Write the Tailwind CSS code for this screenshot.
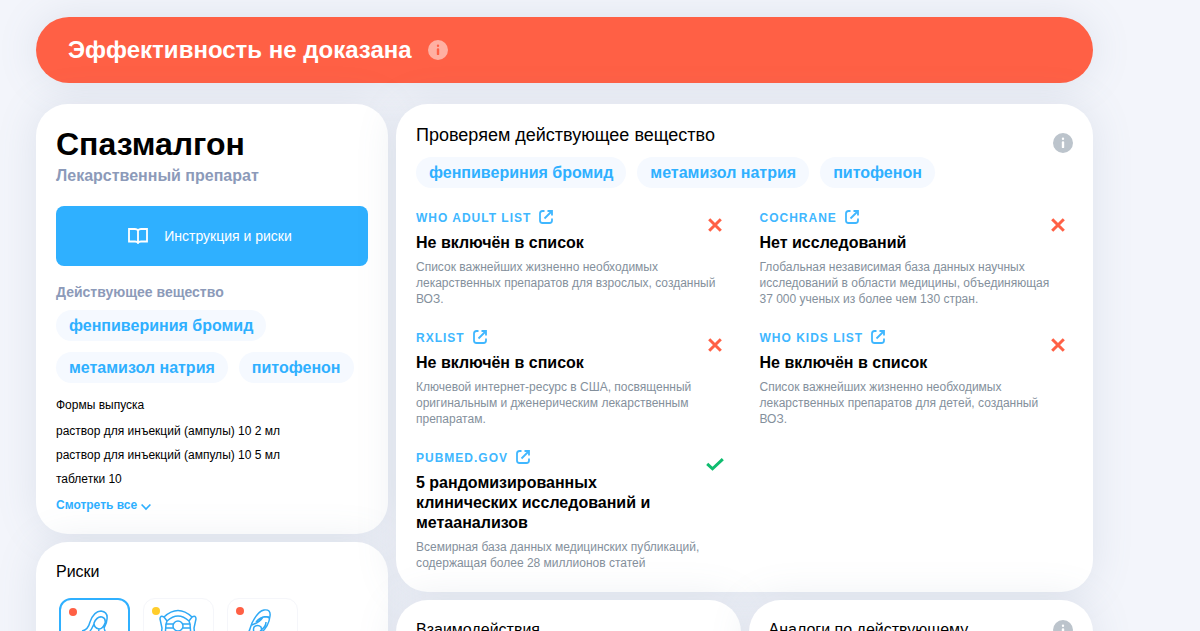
<!DOCTYPE html>
<html lang="ru">
<head>
    <meta charset="UTF-8">
    <meta name="viewport" content="width=device-width, initial-scale=1.0">
    <script src="https://cdn.jsdelivr.net/npm/@tailwindcss/browser@4"></script>
    <title>Спазмалгон</title>
</head>
<body class="bg-[#f3f5fb] font-['Liberation_Sans',Arial,sans-serif] text-black">

    <!-- icons used more than once -->
    <svg class="hidden">
        <symbol id="icon-info" viewBox="0 0 20 20">
            <path fill-rule="evenodd" fill="currentColor" d="M10 0a10 10 0 1 0 0 20a10 10 0 1 0 0-20zM10 4.600a1.200 1.200 0 1 1 0 2.400a1.200 1.200 0 1 1 0-2.400zM8.800 8.900q0-.6 1.200-.6t1.200.6v5.500q0 .6-1.200.6t-1.200-.6z"/>
        </symbol>
        <symbol id="icon-link" viewBox="0 0 14 14">
            <path fill="none" stroke="currentColor" stroke-width="1.8" d="M5.500 1H3.500Q1 1 1 3.500v7Q1 13 3.500 13h7Q13 13 13 10.500V8.500M8.500 1H13v4.500M13 1L5.500 8.500"/>
        </symbol>
        <symbol id="icon-cross" viewBox="0 0 14 14">
            <path fill="none" stroke="currentColor" stroke-width="3" d="M1.200 1.200l11.600 11.600M12.800 1.200L1.200 12.800"/>
        </symbol>
        <symbol id="icon-check" viewBox="0 0 18 13">
            <path fill="none" stroke="currentColor" stroke-width="3" d="M1.200 5.800l5.300 5L16.800 1.200"/>
        </symbol>
    </svg>

    <main class="pt-[17px] pl-9 pr-[107px]">

        <div class="flex items-center gap-4 h-[66px] pl-8 rounded-[33px] bg-[#ff6045] text-white shadow-[0_0_40px_rgba(110,130,155,0.15)]">
            <h2 class="text-2xl font-bold">Эффективность не доказана</h2>
            <button aria-label="Подробнее" class="text-white/50"><svg class="size-5"><use href="#icon-info"/></svg></button>
        </div>

        <div class="flex items-start gap-2 mt-[21px]">

            <div class="w-[352px] shrink-0 flex flex-col gap-2">
                <section class="rounded-[32px] bg-white px-5 pt-5 pb-[19px] shadow-[0_0_40px_rgba(110,130,155,0.15)]">
                    <h1 class="text-[32px] leading-10 font-bold">Спазмалгон</h1>
                    <p class="text-base font-bold text-[#8c9ab9]">Лекарственный препарат</p>
                    <button class="mt-[18px] w-full h-15 pr-1 rounded-lg bg-[#2fb0ff] text-white text-sm flex items-center justify-center gap-4">
                        <svg class="w-5 h-4" viewBox="0 0 20 16" fill="none" stroke="currentColor" stroke-width="1.8"><path d="M10 2.500Q9 1 7 1H1v12.500h6Q9.500 13.500 10 15Q10.500 13.500 13 13.500h6V1h-6Q11 1 10 2.500zM10 2.500V15"/></svg>
                        Инструкция и риски
                    </button>
                    <h3 class="mt-4 text-sm font-bold text-[#8c9ab9]">Действующее вещество</h3>
                    <div class="mt-2 flex flex-wrap gap-[11px] text-base leading-[31px] font-bold text-[#2fb0ff]">
                        <a href="#" class="px-[13px] rounded-full bg-[#f5f9ff]">фенпивериния бромид</a>
                        <a href="#" class="px-[13px] rounded-full bg-[#f5f9ff]">метамизол натрия</a>
                        <a href="#" class="px-[13px] rounded-full bg-[#f5f9ff]">питофенон</a>
                    </div>
                    <h4 class="mt-3 text-xs leading-5">Формы выпуска</h4>
                    <ul class="mt-1 text-xs leading-6">
                        <li>раствор для инъекций (ампулы) 10 2 мл</li>
                        <li>раствор для инъекций (ампулы) 10 5 мл</li>
                        <li>таблетки 10</li>
                    </ul>
                    <button class="mt-1 flex items-center gap-1 text-xs leading-5 font-bold text-[#2fb0ff]">
                        Смотреть все
                        <svg class="w-2.5 h-2 mt-1" viewBox="0 0 10 8" fill="none" stroke="currentColor" stroke-width="1.700"><path d="M.6 1.500L5 6L9.400 1.500"/></svg>
                    </button>
                </section>

                <section class="rounded-[32px] bg-white px-5 pt-5 pb-8 shadow-[0_0_40px_rgba(110,130,155,0.15)]">
                    <h3 class="text-base leading-5">Риски</h3>
                    <div class="mt-4 pl-[3px] flex gap-[13px] text-[#2fa9f5]">
                        <button aria-label="Беременность" class="relative w-[71px] h-20 rounded-xl border-2 border-[#2fb0ff]">
                            <span class="absolute left-2 top-2 size-2 rounded-full bg-[#ff6045]"></span>
                            <svg class="absolute left-5 top-2.5 w-9 h-12" viewBox="0 0 36 48" fill="none" stroke="currentColor" stroke-width="1.500"><path d="M1 21Q7 20 9 12Q13 1 20 1Q27 2 26 9Q26 13 23 18M13 13Q16 6 21 7Q25 8 24 13Q22 19 18 19Q13 18 13 13zM13 14Q11 19 7 24M18 19L17 26M7 24Q0 33 5 43h19Q29 34 23 18"/></svg>
                        </button>
                        <button aria-label="Вождение" class="relative w-[71px] h-20 rounded-xl border border-[#f5f6fa]">
                            <span class="absolute left-2 top-2 size-2 rounded-full bg-[#ffcd2c]"></span>
                            <svg class="absolute left-3.5 top-2.5 w-10 h-12" viewBox="0 0 40 48" fill="none" stroke="currentColor" stroke-width="1.500"><path d="M6 8Q20-5 34 8L31 12Q20 2 9 12zM9 12L8 15H15M31 12L32 15H25M7 19H15M25 19H33M6 8Q2 6 2 10L4 19L3 28M34 8Q38 6 38 10L36 19L37 28M8 15L7 28Q20 42 33 28L32 15"/><circle cx="20" cy="17" r="5"/></svg>
                        </button>
                        <button aria-label="Кормление грудью" class="relative w-[71px] h-20 rounded-xl border border-[#f5f6fa]">
                            <span class="absolute left-2 top-2 size-2 rounded-full bg-[#ff6045]"></span>
                            <svg class="absolute left-3.5 top-2.5 w-9 h-12" viewBox="0 0 36 48" fill="none" stroke="currentColor" stroke-width="1.500"><path d="M6 25Q8 20 10 14Q16 2 22 1Q29 0 28 7Q27 17 19 24M10 16Q18 13 21 8Q25 7 27 9M14 13Q19 7 27 8M12 18Q16 15 19 18Q21 24 16 25Q10 24 12 18zM24 13Q24 18 18 22M8 20Q6 24 8 29Q14 40 27 34L19 24"/></svg>
                        </button>
                    </div>
                </section>
            </div>

            <div class="flex-1 min-w-0 flex flex-col gap-2">
                <section class="rounded-[32px] bg-white px-5 pt-[19px] pb-[21px] shadow-[0_0_40px_rgba(110,130,155,0.15)]">
                    <div class="flex items-start justify-between">
                        <h2 class="text-lg leading-6">Проверяем действующее вещество</h2>
                        <button aria-label="Подробнее" class="mt-2.5 -mb-4 text-[#bcc4cc]"><svg class="size-5"><use href="#icon-info"/></svg></button>
                    </div>
                    <div class="mt-2.5 flex flex-wrap gap-[11px] text-base leading-[31px] font-bold text-[#2fb0ff]">
                        <a href="#" class="px-[13px] rounded-full bg-[#f5f9ff]">фенпивериния бромид</a>
                        <a href="#" class="px-[13px] rounded-full bg-[#f5f9ff]">метамизол натрия</a>
                        <a href="#" class="px-[13px] rounded-full bg-[#f5f9ff]">питофенон</a>
                    </div>

                    <div class="mt-5 grid grid-cols-2 gap-x-[30px] gap-y-[21px]">
                        <article>
                            <div class="flex justify-between">
                                <div class="pr-8">
                                    <a href="#" class="flex items-center gap-2 text-xs leading-5 font-bold tracking-[1px] text-[#40b7ff]">WHO ADULT LIST <svg class="size-3.5 mb-0.5"><use href="#icon-link"/></svg></a>
                                    <h3 class="mt-[5px] text-base leading-5 font-bold">Не включён в список</h3>
                                </div>
                                <svg class="size-3.5 mt-2.5 mr-2 shrink-0 text-[#ff6045]"><use href="#icon-cross"/></svg>
                            </div>
                            <p class="mt-1.5 pr-2 text-xs leading-4 text-[#84909c]">Список важнейших жизненно необходимых лекарственных препаратов для взрослых, созданный ВОЗ.</p>
                        </article>
                        <article>
                            <div class="flex justify-between">
                                <div class="pr-8">
                                    <a href="#" class="flex items-center gap-2 text-xs leading-5 font-bold tracking-[1px] text-[#40b7ff]">COCHRANE <svg class="size-3.5 mb-0.5"><use href="#icon-link"/></svg></a>
                                    <h3 class="mt-[5px] text-base leading-5 font-bold">Нет исследований</h3>
                                </div>
                                <svg class="size-3.5 mt-2.5 mr-2 shrink-0 text-[#ff6045]"><use href="#icon-cross"/></svg>
                            </div>
                            <p class="mt-1.5 pr-2 text-xs leading-4 text-[#84909c]">Глобальная независимая база данных научных исследований в области медицины, объединяющая 37 000 ученых из более чем 130 стран.</p>
                        </article>
                        <article>
                            <div class="flex justify-between">
                                <div class="pr-8">
                                    <a href="#" class="flex items-center gap-2 text-xs leading-5 font-bold tracking-[1px] text-[#40b7ff]">RXLIST <svg class="size-3.5 mb-0.5"><use href="#icon-link"/></svg></a>
                                    <h3 class="mt-[5px] text-base leading-5 font-bold">Не включён в список</h3>
                                </div>
                                <svg class="size-3.5 mt-2.5 mr-2 shrink-0 text-[#ff6045]"><use href="#icon-cross"/></svg>
                            </div>
                            <p class="mt-1.5 pr-2 text-xs leading-4 text-[#84909c]">Ключевой интернет-ресурс в США, посвященный оригинальным и дженерическим лекарственным препаратам.</p>
                        </article>
                        <article>
                            <div class="flex justify-between">
                                <div class="pr-8">
                                    <a href="#" class="flex items-center gap-2 text-xs leading-5 font-bold tracking-[1px] text-[#40b7ff]">WHO KIDS LIST <svg class="size-3.5 mb-0.5"><use href="#icon-link"/></svg></a>
                                    <h3 class="mt-[5px] text-base leading-5 font-bold">Не включён в список</h3>
                                </div>
                                <svg class="size-3.5 mt-2.5 mr-2 shrink-0 text-[#ff6045]"><use href="#icon-cross"/></svg>
                            </div>
                            <p class="mt-1.5 pr-2 text-xs leading-4 text-[#84909c]">Список важнейших жизненно необходимых лекарственных препаратов для детей, созданный ВОЗ.</p>
                        </article>
                        <article>
                            <div class="flex justify-between">
                                <div class="pr-8">
                                    <a href="#" class="flex items-center gap-2 text-xs leading-5 font-bold tracking-[1px] text-[#40b7ff]">PUBMED.GOV <svg class="size-3.5 mb-0.5"><use href="#icon-link"/></svg></a>
                                    <h3 class="mt-[5px] text-base leading-5 font-bold">5 рандомизированных клинических исследований и метаанализов</h3>
                                </div>
                                <svg class="w-[18px] h-[13px] mt-2.5 mr-1.5 shrink-0 text-[#0fbc6f]"><use href="#icon-check"/></svg>
                            </div>
                            <p class="mt-1.5 pr-2 text-xs leading-4 text-[#84909c]">Всемирная база данных медицинских публикаций, содержащая более 28 миллионов статей</p>
                        </article>
                    </div>
                </section>

                <div class="grid grid-cols-2 gap-2">
                    <section class="rounded-[32px] bg-white px-5 pt-5 pb-10 shadow-[0_0_40px_rgba(110,130,155,0.15)]">
                        <h3 class="text-base leading-5">Взаимодействия</h3>
                    </section>
                    <section class="flex items-start justify-between rounded-[32px] bg-white px-5 pt-5 pb-10 shadow-[0_0_40px_rgba(110,130,155,0.15)]">
                        <h3 class="text-base leading-5">Аналоги по действующему</h3>
                        <button aria-label="Подробнее" class="text-[#bcc4cc]"><svg class="size-5"><use href="#icon-info"/></svg></button>
                    </section>
                </div>
            </div>
        </div>
    </main>

</body>
</html>
